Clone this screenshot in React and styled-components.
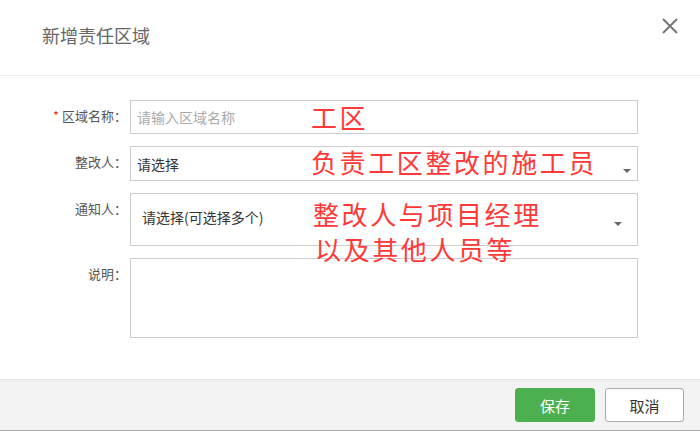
import React from 'react'
import styled, { createGlobalStyle } from 'styled-components'

const GlobalStyle = createGlobalStyle`
  html, body {
    margin: 0;
    padding: 0;
    background: #fff;
  }
  body {
    font-family: 'Noto Sans CJK SC', 'Microsoft YaHei', sans-serif;
  }
`

const Modal = styled.div`
  width: 700px;
  height: 431px;
  display: flex;
  flex-direction: column;
  background: #fff;
  position: relative;
  overflow: hidden;
`

const Header = styled.div`
  height: 75px;
  border-bottom: 1px solid #eeeeee;
  display: flex;
  justify-content: space-between;
  align-items: flex-start;
  padding: 0 22px 0 42px;
`

const Title = styled.h2`
  margin: 25px 0 0;
  font-size: 18px;
  line-height: 20px;
  font-weight: normal;
  color: #666;
`

const Close = styled.button`
  margin-top: 18px;
  width: 16px;
  height: 16px;
  padding: 0;
  border: none;
  background: none;
  cursor: pointer;
  svg {
    display: block;
  }
`

const Body = styled.div`
  flex: 1;
  position: relative;
  padding-top: 24px;
`

const Form = styled.div`
  display: grid;
  grid-template-columns: 130px 508px;
  row-gap: 12px;
`

const Label = styled.label`
  font-size: 13px;
  line-height: 14px;
  color: #555;
  text-align: right;
  padding: 9px 3px 0 0;
  white-space: nowrap;
`

const Star = styled.span`
  color: #e53935;
  margin-right: 3px;
`

const Input = styled.input`
  box-sizing: border-box;
  height: 34px;
  width: 100%;
  border: 1px solid #ccc;
  padding: 0 6px;
  font-family: inherit;
  font-size: 14px;
  color: #333;
  outline: none;
  &::placeholder {
    color: #aaa;
  }
`

const Select = styled.div`
  box-sizing: border-box;
  height: ${p => p.$height}px;
  border: 1px solid #ccc;
  display: flex;
  justify-content: space-between;
  align-items: flex-start;
  padding: ${p => p.$padTop}px ${p => p.$padRight}px 0 ${p => p.$padLeft}px;
  font-size: 14px;
  line-height: 20px;
  color: #333;
`

const Caret = styled.span`
  width: 0;
  height: 0;
  margin-top: 15px;
  border-left: 4px solid transparent;
  border-right: 4px solid transparent;
  border-top: 4px solid #666;
`

const TextArea = styled.textarea`
  box-sizing: border-box;
  height: 80px;
  width: 100%;
  border: 1px solid #ccc;
  resize: none;
  outline: none;
  font-family: inherit;
`

const Note = styled.div`
  position: absolute;
  left: ${p => p.$x}px;
  top: ${p => p.$y}px;
  font-size: 26px;
  line-height: 35px;
  letter-spacing: 2.6px;
  color: #ff3838;
  white-space: nowrap;
  pointer-events: none;
`

const Footer = styled.div`
  height: 50px;
  background: #f3f3f3;
  border-top: 1px solid #e6e6e6;
  border-bottom: 1px solid #a8a8a8;
  box-sizing: border-box;
  height: 52px;
  display: flex;
  justify-content: flex-end;
  align-items: flex-start;
  gap: 10px;
  padding: 8px 16px 0 0;
`

const Button = styled.button`
  width: ${p => p.$width}px;
  height: 34px;
  border-radius: 3px;
  font-family: inherit;
  font-size: 15px;
  cursor: pointer;
  border: 1px solid ${p => (p.$primary ? '#4caf50' : '#aaa')};
  background: ${p => (p.$primary ? '#4caf50' : '#fff')};
  color: ${p => (p.$primary ? '#fff' : '#333')};
`

const App = () => {
  return (
    <Modal>
      <GlobalStyle />
      <Header>
        <Title>新增责任区域</Title>
        <Close aria-label="关闭">
          <svg width="16" height="16" viewBox="0 0 16 16">
            <path d="M1 1 L15 15 M15 1 L1 15" stroke="#777" strokeWidth="2" />
          </svg>
        </Close>
      </Header>
      <Body>
        <Form>
          <Label>
            <Star>*</Star>区域名称：
          </Label>
          <Input placeholder="请输入区域名称" />

          <Label>整改人：</Label>
          <Select $height={35} $padTop={7} $padLeft={6} $padRight={6}>
            <span>请选择</span>
            <Caret />
          </Select>

          <Label>通知人：</Label>
          <Select $height={53} $padTop={13} $padLeft={11} $padRight={15}>
            <span>请选择(可选择多个)</span>
            <Caret />
          </Select>

          <Label>说明：</Label>
          <TextArea />
        </Form>

        <Note $x={311} $y={23}>工区</Note>
        <Note $x={311} $y={68}>负责工区整改的施工员</Note>
        <Note $x={313} $y={120}>
          整改人与项目经理
          <br />
          <span style={{ marginLeft: 2 }}>以及其他人员等</span>
        </Note>
      </Body>
      <Footer>
        <Button $primary $width={80}>保存</Button>
        <Button $width={79}>取消</Button>
      </Footer>
    </Modal>
  )
}

export default App
